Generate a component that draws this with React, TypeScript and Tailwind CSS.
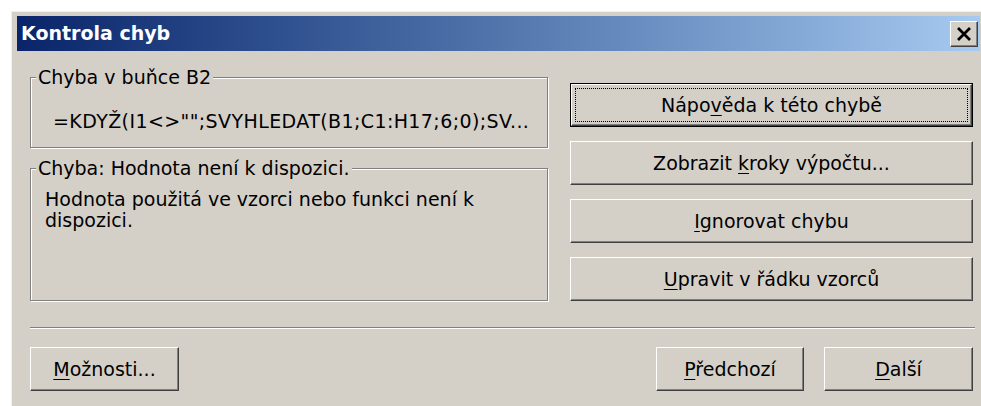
// Error-checking dialog: formula/error group boxes, action buttons, navigation row
import type { ReactNode } from 'react'

const face = "font-['DejaVu_Sans',sans-serif]"

function GroupBox({ label, className, children }: { label: string; className: string; children: ReactNode }) {
  return (
    <div
      className={`relative border border-[#808080] shadow-[inset_1px_1px_0_#ffffff,1px_1px_0_#ffffff] ${className}`}
    >
      <span className="absolute -top-[12px] left-[5px] bg-[#d4d0c8] px-[2px] text-[19px] leading-[22px] text-black">
        {label}
      </span>
      {children}
    </div>
  )
}

function Button({ children, width, isDefault }: { children: ReactNode; width: string; isDefault?: boolean }) {
  const face3d =
    'border-t border-l border-white border-r border-b border-r-[#404040] border-b-[#404040] shadow-[inset_-1px_-1px_0_#808080] bg-[#d4d0c8]'
  if (isDefault) {
    return (
      <div className={`${width} h-[44px] border border-black`}>
        <div className={`h-full ${face3d} p-[3px]`}>
          <div className="h-full border border-dotted border-black flex items-center justify-center text-[19px] text-black">
            {children}
          </div>
        </div>
      </div>
    )
  }
  return (
    <div className={`${width} h-[44px] ${face3d} flex items-center justify-center text-[19px] text-black`}>
      {children}
    </div>
  )
}

function Key({ children }: { children: string }) {
  return <u className="underline-offset-[3px]">{children}</u>
}

export default function App() {
  return (
    <div className={`w-[981px] h-[406px] bg-white overflow-hidden ${face}`}>
      <div className="ml-[11px] mt-[11px] w-[975px] h-[400px] bg-[#d4d0c8] border-l border-t border-[#f2f0ec] pl-[5px] pt-[4px]">
        {/* title bar */}
        <div className="w-[963px] h-[35px] bg-linear-to-r from-[#0a246a] to-[#a6caf0] flex items-center justify-between">
          <span className="pl-[4px] text-[19px] font-bold text-white leading-none">Kontrola chyb</span>
          <div className="mr-[2px] w-[28px] h-[26px] bg-[#d4d0c8] border-t border-l border-white border-r border-b border-r-[#404040] border-b-[#404040] shadow-[inset_-1px_-1px_0_#808080] flex items-center justify-center">
            <svg width="16" height="14" viewBox="0 0 16 14">
              <path d="M2 1 L14 13 M14 1 L2 13" stroke="#000" strokeWidth="2.8" />
            </svg>
          </div>
        </div>

        {/* body */}
        <div className="pl-[13px]">
          <div className="mt-[32px] flex gap-[22px]">
            <div className="w-[518px] flex flex-col">
              <GroupBox label="Chyba v buňce B2" className="-mt-[6px] h-[71px]">
                <div className="pl-[22px] pt-[32px] text-[19px] leading-[22px] tracking-[0.4px] text-black whitespace-nowrap">
                  =KDYŽ(I1&lt;&gt;"";SVYHLEDAT(B1;C1:H17;6;0);SV...
                </div>
              </GroupBox>
              <GroupBox label="Chyba: Hodnota není k dispozici." className="mt-[20px] h-[133px]">
                <div className="pl-[14px] pt-[20px] text-[19px] leading-[21px] text-black">
                  Hodnota použitá ve vzorci nebo funkci není k
                  <br />
                  dispozici.
                </div>
              </GroupBox>
            </div>

            <div className="w-[403px] flex flex-col gap-[14px]">
              <Button width="w-full" isDefault>
                <span>
                  Nápo<Key>v</Key>ěda k této chybě
                </span>
              </Button>
              <Button width="w-full">
                <span>
                  Zobrazit <Key>k</Key>roky výpočtu...
                </span>
              </Button>
              <Button width="w-full">
                <span>
                  <Key>I</Key>gnorovat chybu
                </span>
              </Button>
              <Button width="w-full">
                <span>
                  <Key>U</Key>pravit v řádku vzorců
                </span>
              </Button>
            </div>
          </div>

          {/* separator */}
          <div className="mt-[26px] w-[945px] h-[2px] border-t border-[#808080] border-b border-b-white" />

          {/* bottom row */}
          <div className="mt-[18px] w-[943px] flex items-center">
            <Button width="w-[149px]">
              <span>
                <Key>M</Key>ožnosti...
              </span>
            </Button>
            <div className="ml-auto flex gap-[20px]">
              <Button width="w-[148px]">
                <span>
                  <Key>P</Key>ředchozí
                </span>
              </Button>
              <Button width="w-[149px]">
                <span>
                  <Key>D</Key>alší
                </span>
              </Button>
            </div>
          </div>
        </div>
      </div>
    </div>
  )
}
